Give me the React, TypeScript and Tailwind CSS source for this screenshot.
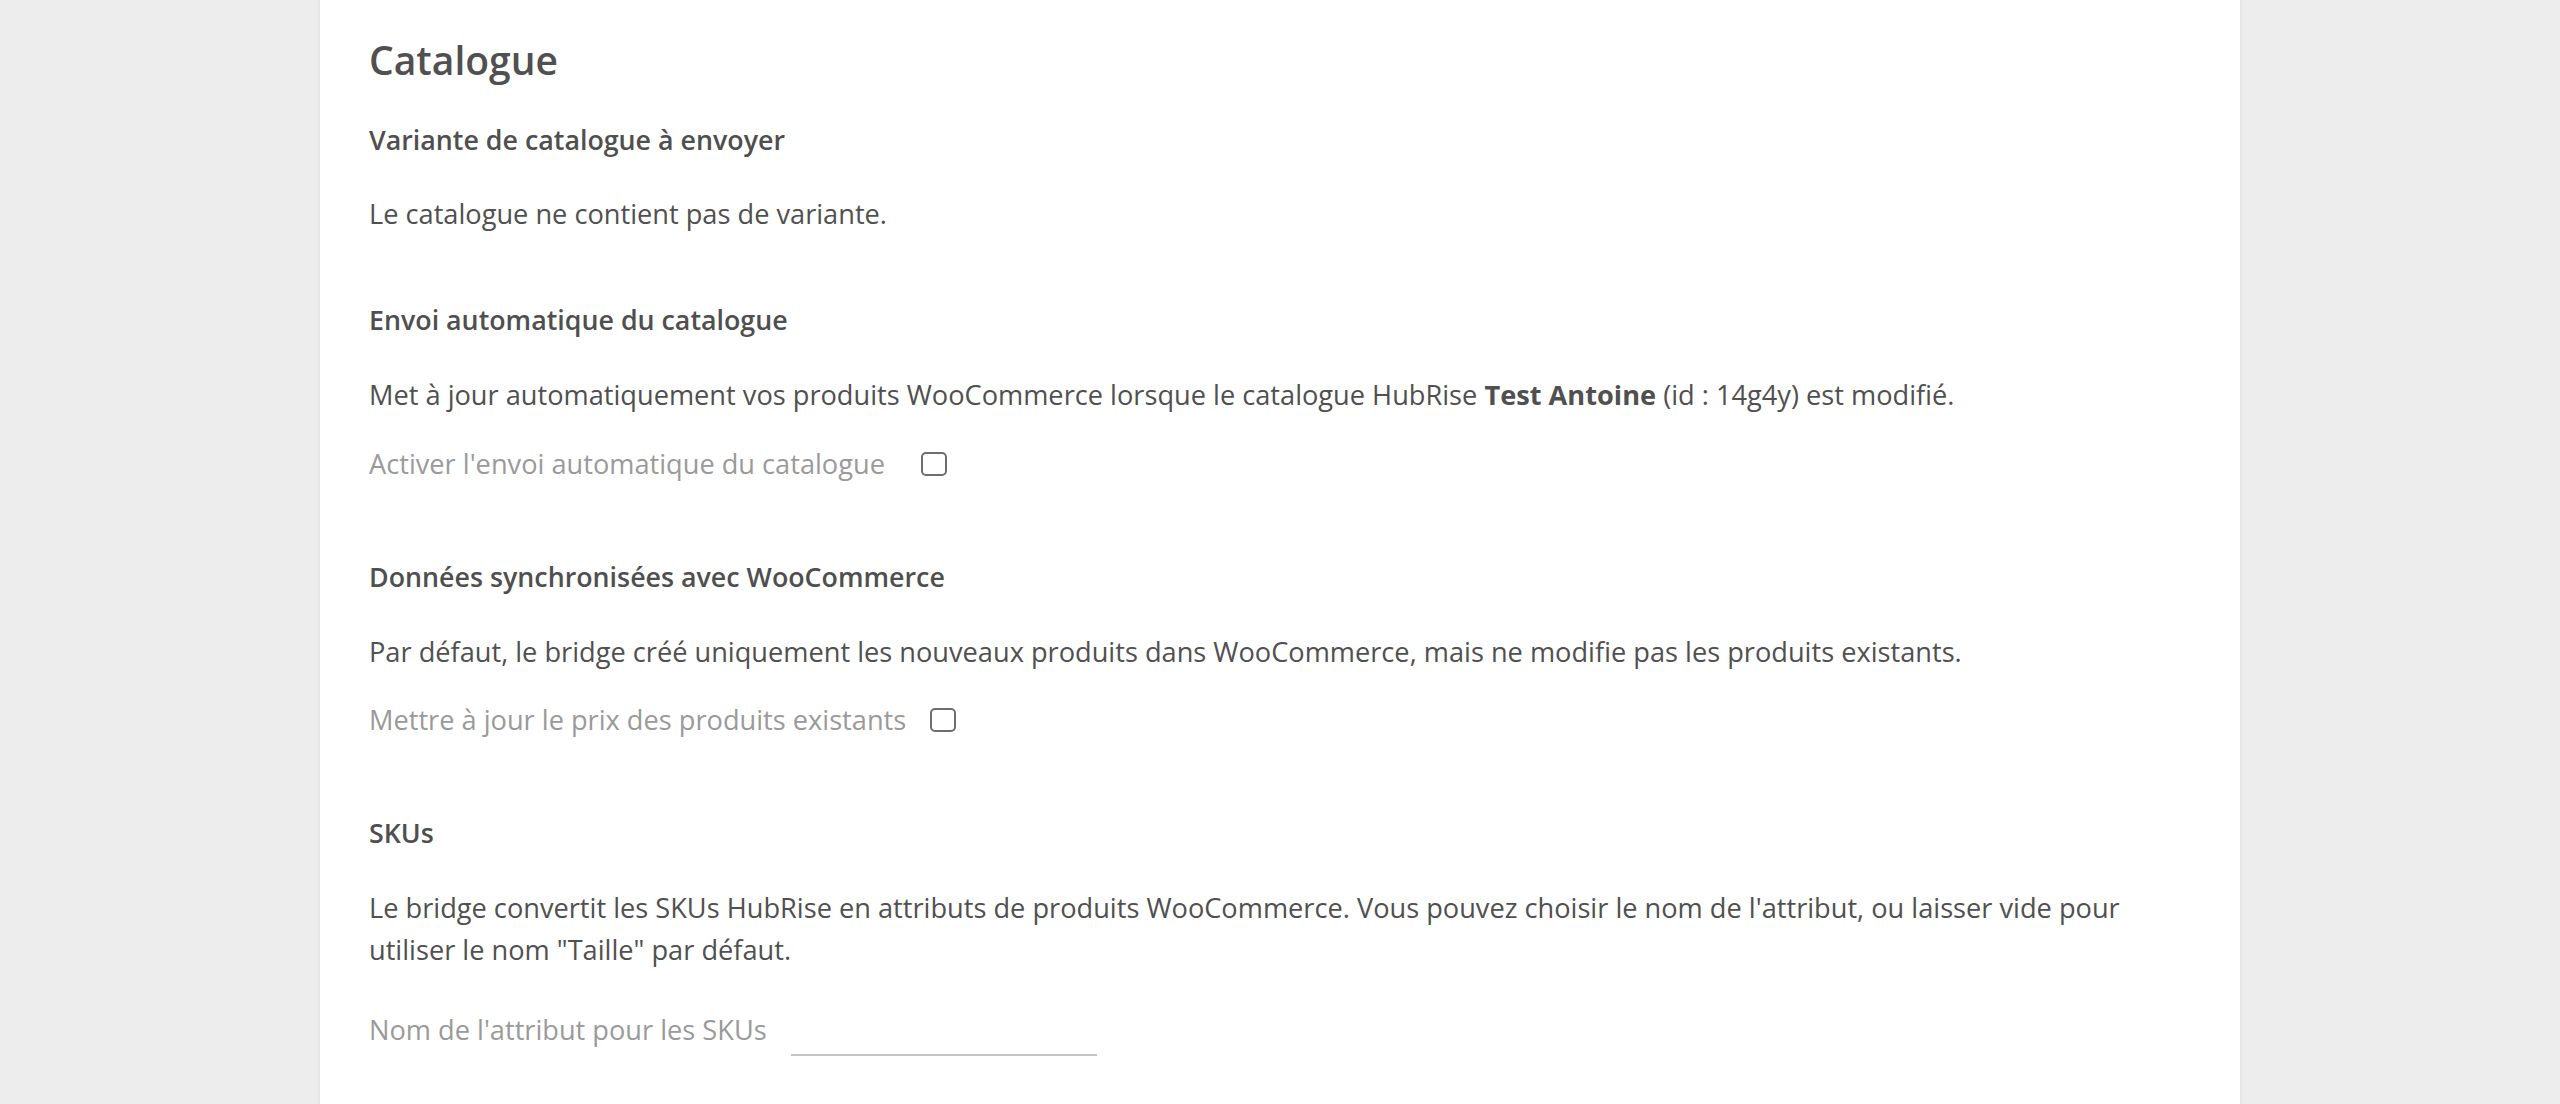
import React from "react";

function Checkbox({ className = "" }: { className?: string }) {
    return (
        <span
            className={`inline-block w-[26px] h-[24px] rounded-[5px] border-2 border-[#6e6e6e] bg-white ${className}`}
        ></span>
    );
}

function Heading({ children }: { children: React.ReactNode }) {
    return <h3 className="text-[26.8px] leading-[42px] font-semibold text-[#4f4f4f]">{children}</h3>;
}

export default function App() {
    return (
        <div className="min-h-screen bg-[#ededed] font-['Open_Sans',sans-serif]">
            <div className="ml-[318px] w-[1924px] min-h-screen bg-white border-x-2 border-[#e6e6e6] pl-[49px] pr-[49px] pt-[36px] pb-[40px] text-[#505050]">
                <h2 className="text-[39px] leading-[48px] font-semibold text-[#505050] mb-[35px]">Catalogue</h2>

                {/* Variante */}
                <section className="mb-[64px]">
                    <Heading>Variante de catalogue à envoyer</Heading>
                    <p className="mt-[32px] text-[27.2px] leading-[42px]">Le catalogue ne contient pas de variante.</p>
                </section>

                {/* Envoi automatique */}
                <section className="mb-[71px]">
                    <Heading>Envoi automatique du catalogue</Heading>
                    <p className="mt-[33px] text-[27.2px] leading-[42px]">
                        Met à jour automatiquement vos produits WooCommerce lorsque le catalogue HubRise{" "}
                        <strong className="font-bold">Test Antoine</strong> (id : 14g4y) est modifié.
                    </p>
                    <label className="mt-[27px] flex items-center h-[42px] text-[27.2px] text-[#9a9a9a]">
                        <span>Activer l'envoi automatique du catalogue</span>
                        <Checkbox className="ml-[36px]" />
                    </label>
                </section>

                {/* Données synchronisées */}
                <section className="mb-[71px]">
                    <Heading>Données synchronisées avec WooCommerce</Heading>
                    <p className="mt-[33px] text-[27.2px] leading-[42px]">
                        Par défaut, le bridge créé uniquement les nouveaux produits dans WooCommerce, mais ne modifie pas les produits existants.
                    </p>
                    <label className="mt-[26px] flex items-center h-[42px] text-[27.2px] text-[#9a9a9a]">
                        <span>Mettre à jour le prix des produits existants</span>
                        <Checkbox className="ml-[24px]" />
                    </label>
                </section>

                {/* SKUs */}
                <section>
                    <Heading>SKUs</Heading>
                    <p className="mt-[33px] text-[27.2px] leading-[42px]">
                        Le bridge convertit les SKUs HubRise en attributs de produits WooCommerce. Vous pouvez choisir le nom de l'attribut, ou laisser vide pour utiliser le nom "Taille" par défaut.
                    </p>
                    <div className="mt-[33px] flex items-center text-[27.2px] text-[#9a9a9a]">
                        <span>Nom de l'attribut pour les SKUs</span>
                        <input
                            type="text"
                            className="ml-[24px] w-[306px] h-[52px] border-b-2 border-[#c4c4c4] outline-none bg-transparent text-[27.2px] text-[#505050]"
                        />
                    </div>
                </section>
            </div>
        </div>
    );
}
